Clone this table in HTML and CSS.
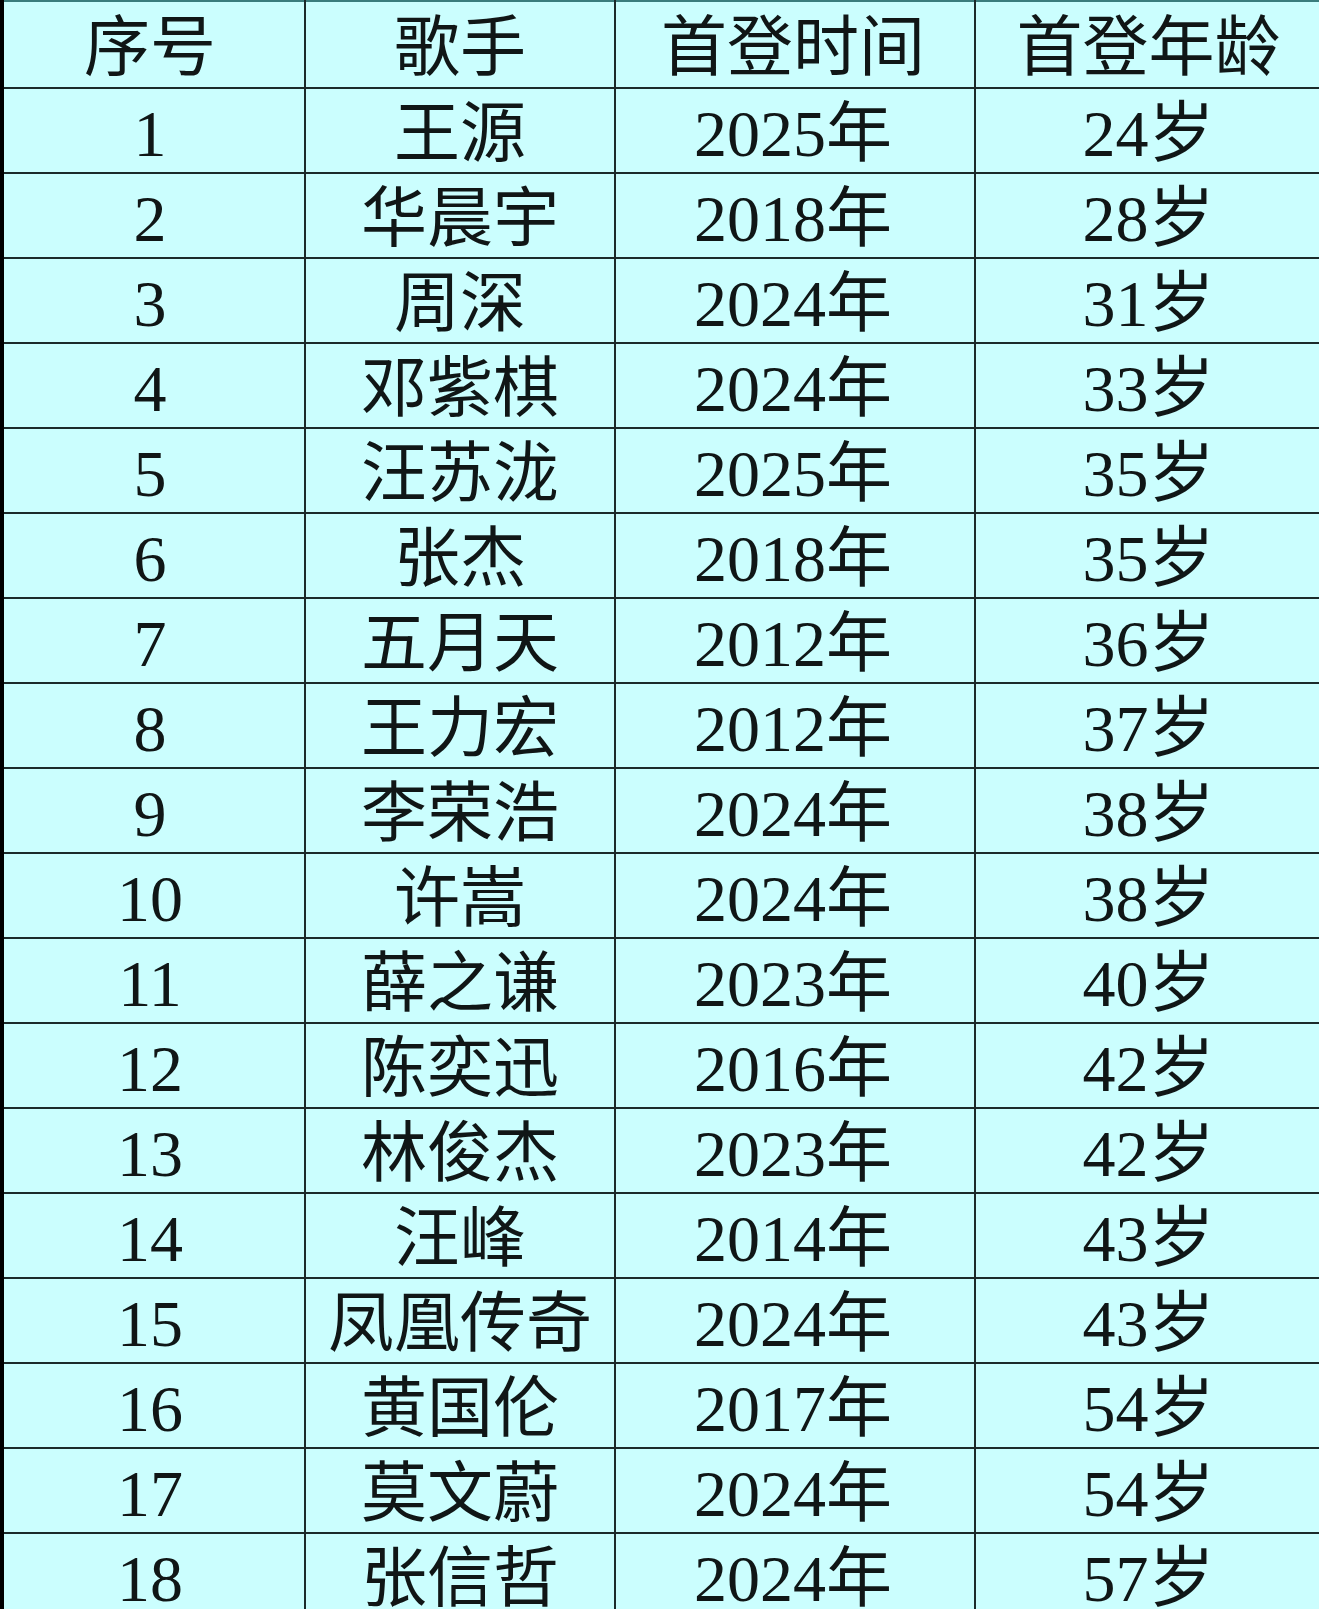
FILE: index.html
```html
<!DOCTYPE html>
<html lang="zh-CN">
<head>
<meta charset="utf-8">
<title>歌手首登时间</title>
<link rel="stylesheet" href="styles.css">
</head>
<body>
<table class="sheet">
  <colgroup>
    <col class="c-no"><col class="c-name"><col class="c-year"><col class="c-age">
  </colgroup>
  <thead>
    <tr class="head"><th>序号</th><th>歌手</th><th>首登时间</th><th>首登年龄</th></tr>
  </thead>
  <tbody>
    <tr><td>1</td><td>王源</td><td>2025年</td><td>24岁</td></tr>
    <tr><td>2</td><td>华晨宇</td><td>2018年</td><td>28岁</td></tr>
    <tr><td>3</td><td>周深</td><td>2024年</td><td>31岁</td></tr>
    <tr><td>4</td><td>邓紫棋</td><td>2024年</td><td>33岁</td></tr>
    <tr><td>5</td><td>汪苏泷</td><td>2025年</td><td>35岁</td></tr>
    <tr><td>6</td><td>张杰</td><td>2018年</td><td>35岁</td></tr>
    <tr><td>7</td><td>五月天</td><td>2012年</td><td>36岁</td></tr>
    <tr><td>8</td><td>王力宏</td><td>2012年</td><td>37岁</td></tr>
    <tr><td>9</td><td>李荣浩</td><td>2024年</td><td>38岁</td></tr>
    <tr><td>10</td><td>许嵩</td><td>2024年</td><td>38岁</td></tr>
    <tr><td>11</td><td>薛之谦</td><td>2023年</td><td>40岁</td></tr>
    <tr><td>12</td><td>陈奕迅</td><td>2016年</td><td>42岁</td></tr>
    <tr><td>13</td><td>林俊杰</td><td>2023年</td><td>42岁</td></tr>
    <tr><td>14</td><td>汪峰</td><td>2014年</td><td>43岁</td></tr>
    <tr><td>15</td><td>凤凰传奇</td><td>2024年</td><td>43岁</td></tr>
    <tr><td>16</td><td>黄国伦</td><td>2017年</td><td>54岁</td></tr>
    <tr><td>17</td><td>莫文蔚</td><td>2024年</td><td>54岁</td></tr>
    <tr><td>18</td><td>张信哲</td><td>2024年</td><td>57岁</td></tr>
  </tbody>
</table>
</body>
</html>
```
FILE: styles.css
```css
html, body {
  margin: 0;
  padding: 0;
  background: #cbfefe;
  overflow: hidden;
}
.sheet {
  width: 1319px;
  table-layout: fixed;
  border-collapse: collapse;
  background: #cbfefe;
  font-family: "Liberation Serif", "Noto Sans CJK SC", serif;
  font-size: 66px;
  color: #101616;
}
.c-no { width: 303px; }
.c-name { width: 310px; }
.c-year { width: 360px; }
.c-age { width: 346px; }
.sheet th, .sheet td {
  border: 2px solid #1c2a2a;
  padding: 7px 0 0 0;
  text-align: center;
  vertical-align: middle;
  font-weight: normal;
  line-height: 1;
  white-space: nowrap;
}
.sheet tr { height: 85px; }
.sheet tr.head { height: 87px; }
.sheet th { border-top: 2px solid #3a7c7c; }
.sheet th:first-child, .sheet td:first-child {
  border-left: 4px solid #000;
  padding-right: 8px;
}
.sheet th:nth-child(3), .sheet td:nth-child(3) { padding-right: 4px; }
.sheet th:last-child, .sheet td:last-child { border-right: none; }
```
